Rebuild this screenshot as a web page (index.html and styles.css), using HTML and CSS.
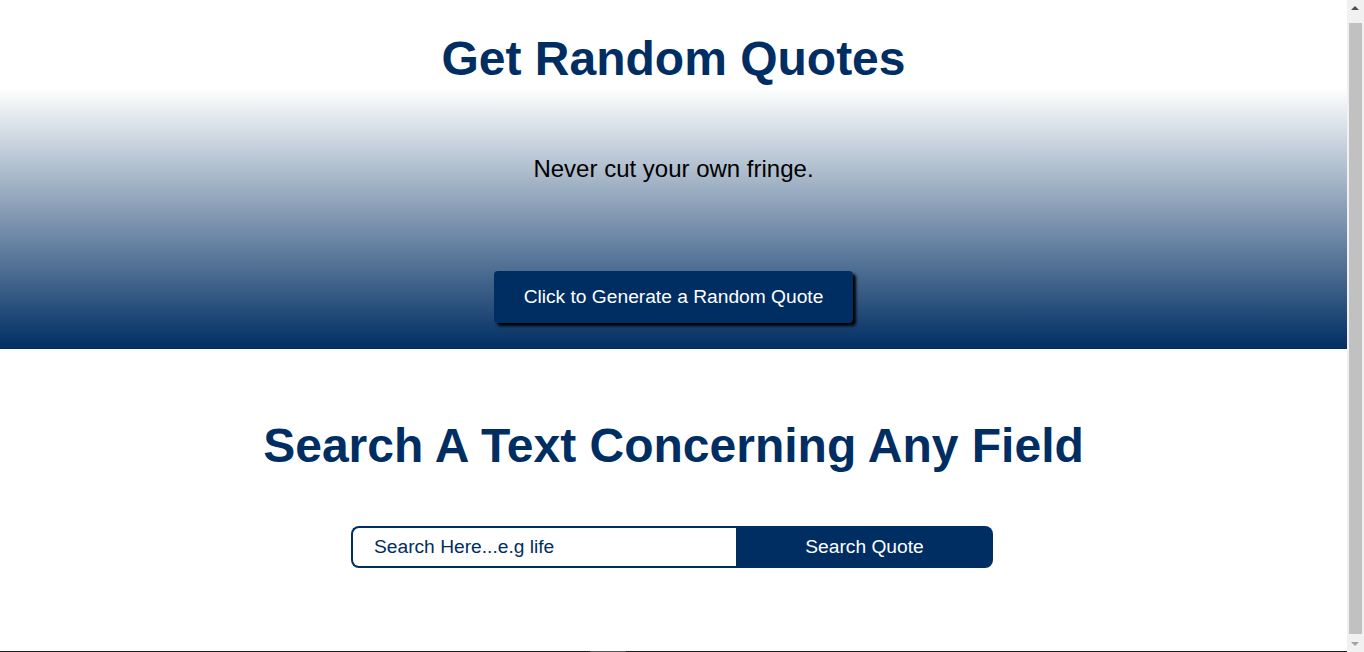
FILE: index.html
```html
<!DOCTYPE html>
<html lang="en">
<head>
<meta charset="utf-8">
<title>Get Random Quotes</title>
<link rel="stylesheet" href="styles.css">
</head>
<body>
<div class="page">
  <header class="hero">
    <h1 class="title">Get Random Quotes</h1>
    <p class="quote">Never cut your own fringe.</p>
    <button class="gen-btn" type="button">Click to Generate a Random Quote</button>
  </header>
  <main class="search">
    <h2 class="search-title">Search A Text Concerning Any Field</h2>
    <form class="search-form">
      <input class="search-input" type="text" placeholder="Search Here...e.g life">
      <button class="search-btn" type="button">Search Quote</button>
    </form>
  </main>
  <footer class="footer"><span class="footer-mark"></span></footer>
</div>
<div class="scrollbar" aria-hidden="true">
  <span class="sb-arrow sb-up"></span>
  <span class="sb-thumb"></span>
  <span class="sb-arrow sb-down"></span>
</div>
</body>
</html>
```
FILE: styles.css
```css
* { box-sizing: border-box; }
html, body { margin: 0; padding: 0; }
body {
  font-family: "Liberation Sans", Arial, sans-serif;
  background: #fff;
}
.page {
  margin-right: 17px;
}
.hero {
  height: 349px;
  display: flex;
  flex-direction: column;
  align-items: center;
  background: linear-gradient(to bottom, #ffffff 0, #ffffff 88px, #002e63 100%);
}
.title {
  margin: 31px 0 0;
  font-size: 48px;
  line-height: 55px;
  font-weight: 700;
  color: #002e63;
}
.quote {
  margin: 69px 0 0;
  font-size: 24px;
  line-height: 28px;
  color: #000;
}
.gen-btn {
  margin-top: 88px;
  width: 359px;
  height: 52px;
  border: none;
  border-radius: 4px;
  background: #002e63;
  color: #fff;
  font-family: inherit;
  font-size: 19.2px;
  box-shadow: 3px 3px 3px #000;
}
.search {
  display: flex;
  flex-direction: column;
  align-items: center;
  padding-top: 69px;
  height: 302px;
}
.search-title {
  margin: 0;
  font-size: 48px;
  line-height: 55px;
  font-weight: 700;
  color: #002e63;
}
.search-form {
  display: flex;
  margin-top: 53px;
  margin-left: -3px;
}
.search-input {
  width: 385px;
  height: 42px;
  border: 2px solid #002e63;
  border-right: none;
  border-radius: 8px 0 0 8px;
  padding: 0 21px;
  font-family: inherit;
  font-size: 19.2px;
  color: #002e63;
  outline: none;
}
.search-input::placeholder { color: #002e63; opacity: 1; }
.search-btn {
  width: 257px;
  height: 42px;
  border: none;
  border-radius: 0 8px 8px 0;
  background: #002e63;
  color: #fff;
  font-family: inherit;
  font-size: 19.2px;
}
.footer {
  height: 10px;
  background: #1e1e1e;
  position: relative;
}
.footer-mark {
  position: absolute;
  left: 590px;
  top: 0;
  width: 36px;
  height: 2px;
  background: #555;
}
.scrollbar {
  position: fixed;
  top: 0;
  right: 0;
  width: 17px;
  height: 100%;
  background: #f1f1f1;
  display: flex;
  flex-direction: column;
  align-items: center;
}
.sb-arrow {
  flex: 0 0 17px;
  width: 17px;
  position: relative;
}
.sb-arrow::after {
  content: "";
  position: absolute;
  left: 4px;
  border-left: 4px solid transparent;
  border-right: 4px solid transparent;
}
.sb-up::after { top: 6px; border-bottom: 4px solid #505050; }
.sb-down::after { top: 7px; border-top: 4px solid #a3a3a3; }
.sb-thumb {
  flex: 1;
  width: 13px;
  margin: 6px 0 1px;
  background: #c1c1c1;
}
```
